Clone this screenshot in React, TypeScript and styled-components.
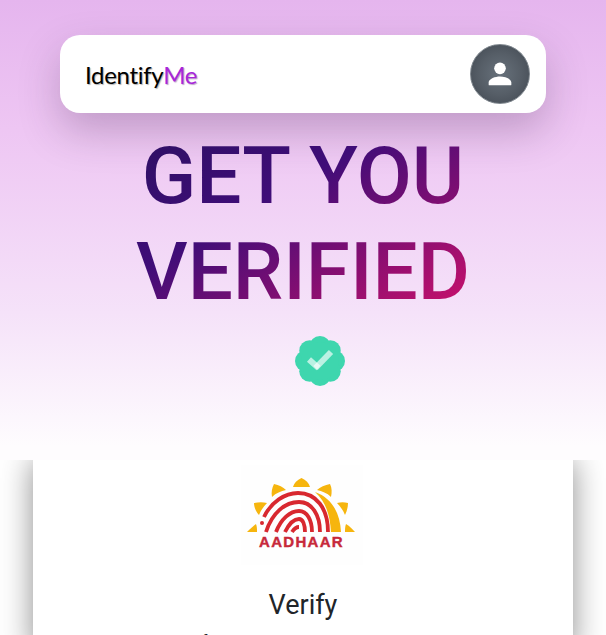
import styled, { createGlobalStyle } from "styled-components";

const GlobalStyle = createGlobalStyle`
  html, body {
    margin: 0;
    padding: 0;
    height: 100%;
    overflow: hidden;
    background: #fff;
    font-family: Roboto, "Liberation Sans", sans-serif;
  }
  * {
    box-sizing: border-box;
  }
`;

const Hero = styled.header`
  position: relative;
  z-index: 1;
  height: 460px;
  padding-top: 35px;
  display: flex;
  flex-direction: column;
  align-items: center;
  background: linear-gradient(180deg, #e5b5ee 0%, #eec6f3 28%, #f5e2f9 68%, #fefcfe 97%);
`;

const Navbar = styled.nav`
  width: 486px;
  height: 78px;
  padding: 0 16px 0 25px;
  display: flex;
  align-items: center;
  justify-content: space-between;
  background: #fff;
  border-radius: 20px;
  box-shadow: 0 18px 40px rgba(60, 30, 70, 0.25);
`;

const Brand = styled.div`
  font-family: Lato, "Noto Sans", sans-serif;
  font-size: 24px;
  font-weight: 400;
  letter-spacing: -0.3px;
  color: #000;
  text-shadow: 1px 1px 1px rgba(0, 0, 0, 0.3);
`;

const BrandAccent = styled.span`
  color: #a726d9;
  text-shadow: 1px 1px 1px rgba(90, 20, 120, 0.4);
`;

const Avatar = styled.div`
  width: 60px;
  height: 60px;
  display: flex;
  align-items: center;
  justify-content: center;
  border-radius: 50%;
  border: 1px solid #7f878e;
  background: radial-gradient(circle, #67717b 0%, #565e67 50%, #3f464f 100%);
`;

const Title = styled.h1`
  width: fit-content;
  margin: 15px 0 0;
  font-size: 80px;
  font-weight: 500;
  line-height: 96px;
  text-align: center;
  color: transparent;
  background: linear-gradient(to bottom right, #2c1062 0%, #3f0d78 38%, #d2106a 100%);
  -webkit-background-clip: text;
  background-clip: text;
`;

const Badge = styled.svg`
  display: block;
  width: 52px;
  height: 52px;
  margin: 15px 0 0 34px;
`;

const Card = styled.section`
  width: 540px;
  margin: 0 auto;
  padding-top: 5px;
  display: flex;
  flex-direction: column;
  align-items: center;
  background: #fff;
  box-shadow: 0 0 30px rgba(0, 0, 0, 0.45);
`;

const AadhaarLogo = styled.svg`
  display: block;
  width: 146px;
  height: 100px;
`;

const CardTitle = styled.h2`
  margin: 23px 0 0;
  font-size: 27px;
  font-weight: 400;
  line-height: 34px;
  color: #212529;
`;

const CardText = styled.p`
  margin: 8px 0 0;
  font-size: 16px;
  line-height: 24px;
  color: #212529;
`;

const lobes = [0, 45, 90, 135, 180, 225, 270, 315].map((deg) => ({
  x: 26 + 14.5 * Math.cos((deg * Math.PI) / 180 - Math.PI / 2),
  y: 26 + 14.5 * Math.sin((deg * Math.PI) / 180 - Math.PI / 2),
}));

const rays = [
  "M71.5 13 C67 15 64 18 63 22 L80 22 C79 18 76 15 71.5 13Z",
  "M42 32 C41 27 42 23 44 19 C49 20 53 22 56 25 C51 26 46 28 42 32Z",
  "M101 32 C97 28 92 26 87 25 C90 22 95 20 100 19 C102 23 102 27 101 32Z",
  "M29 50 C26 47 24 42 24 38 C29 37 33 37 37 38 C34 41 31 45 29 50Z",
  "M115 50 C113 45 110 41 107 38 C111 37 114 37 118 38 C118 42 117 46 115 50Z",
  "M17 67 C20 64 23 61 26 59 C27 62 27 64 27 67Z",
  "M125 67 C122 64 120 61 116 59 C115 62 115 64 115 67Z",
];

export default function App() {
  return (
    <>
      <GlobalStyle />
      <Hero>
        <Navbar>
          <Brand>
            Identify<BrandAccent>Me</BrandAccent>
          </Brand>
          <Avatar>
            <svg width="34" height="34" viewBox="0 0 24 24" fill="#fff">
              <circle cx="12" cy="8" r="4.1" />
              <path d="M12 13.800c-3.200 0-8 1.500-8 4.200v1.600c0 .3.2.4.4.4h15.200c.2 0 .4-.1.4-.4V18c0-2.700-4.800-4.200-8-4.200z" />
            </svg>
          </Avatar>
        </Navbar>
        <Title>
          GET YOU
          <br />
          VERIFIED
        </Title>
        <Badge viewBox="0 0 52 52">
          {lobes.map((l, i) => (
            <circle key={i} cx={l.x} cy={l.y} r="10.500" fill="#3ed6ae" />
          ))}
          <circle cx="26" cy="26" r="19" fill="#3ed6ae" />
          <path d="M15 24.500 L24.500 33" stroke="#fff" strokeOpacity="0.65" strokeWidth="6" fill="none" />
          <path d="M21.500 33 L37 17" stroke="#fff" strokeOpacity="0.65" strokeWidth="6" fill="none" />
        </Badge>
      </Hero>
      <Card>
        <AadhaarLogo viewBox="0 0 146 100">
          <rect x="11" y="0" width="122" height="100" fill="#fefefe" />
          {rays.map((d) => (
            <path key={d} d={d} fill="#f6b50e" />
          ))}
          <path d="M85 27 C102 33 110 48 111 67 L101 67 C100 50 96 37 85 27Z" fill="#f6b50e" />
          <g fill="none" stroke="#d8282f" strokeWidth="3.800">
            <path d="M34 52 C41 37 55 28 68 28 C86 28 98 43 98 67" />
            <path d="M36 67 C42 48 55 37 69 37 C82 37 90 50 90 67" />
            <path d="M46 67 C51 54 60 46 69 46 C77 46 82 55 82 67" />
            <path d="M55 67 C59 59 64 54 69 54 C73 54 75 60 75 67" />
            <path d="M62 67 C64 64 66 62 69 62" />
          </g>
          <circle cx="32" cy="58" r="2" fill="#d8282f" />
          <text
            x="71.500"
            y="82"
            textAnchor="middle"
            fontFamily="Liberation Sans, sans-serif"
            fontWeight="700"
            fontSize="15"
            letterSpacing="1.300"
            fill="#c7283a"
            stroke="#c7283a"
            strokeWidth="0.400"
          >
            AADHAAR
          </text>
        </AadhaarLogo>
        <CardTitle>Verify</CardTitle>
        <CardText>Verify your name using a digital card</CardText>
      </Card>
    </>
  );
}
